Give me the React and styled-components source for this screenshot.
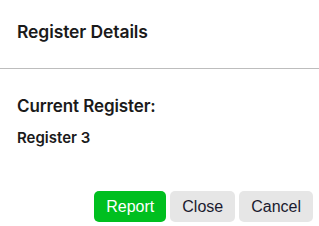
import styled, { createGlobalStyle } from "styled-components";

const Global = createGlobalStyle`
  html, body {
    margin: 0;
    padding: 0;
    background: #fff;
  }
  body {
    font-family: Inter, "Open Sans", sans-serif;
    color: #1a1a1a;
  }
`;

const Modal = styled.div`
  width: 319px;
  height: 226px;
  display: flex;
  flex-direction: column;
  background: #fff;
`;

const Header = styled.div`
  height: 69px;
  box-sizing: border-box;
  padding: 0 17px;
  display: flex;
  align-items: center;
  border-bottom: 1px solid #bdbdbd;
`;

const Title = styled.h2`
  margin: 0;
  font-size: 17.5px;
  font-weight: 600;
  letter-spacing: -0.1px;
  padding-bottom: 5px;
`;

const Body = styled.div`
  padding: 27px 17px 0;
  flex: 1;
`;

const Label = styled.h3`
  margin: 0;
  font-size: 17px;
  font-weight: 600;
  letter-spacing: -0.1px;
`;

const Value = styled.p`
  margin: 12px 0 0;
  font-size: 15px;
  font-weight: 600;
`;

const Footer = styled.div`
  display: flex;
  justify-content: flex-end;
  gap: 4px;
  padding: 0 6px 4px;
`;

const Button = styled.button`
  height: 31px;
  padding: 0 12px;
  border: none;
  border-radius: 5px;
  font-family: "Liberation Sans", Arial, sans-serif;
  font-size: 16px;
  background: ${(p) => (p.$primary ? "#00bf1f" : "#e6e6e6")};
  color: ${(p) => (p.$primary ? "#fff" : "#1a1a2e")};
  cursor: pointer;
`;

export default function App() {
  return (
    <Modal>
      <Global />
      <Header>
        <Title>Register Details</Title>
      </Header>
      <Body>
        <Label>Current Register:</Label>
        <Value>Register 3</Value>
      </Body>
      <Footer>
        <Button $primary>Report</Button>
        <Button>Close</Button>
        <Button>Cancel</Button>
      </Footer>
    </Modal>
  );
}
